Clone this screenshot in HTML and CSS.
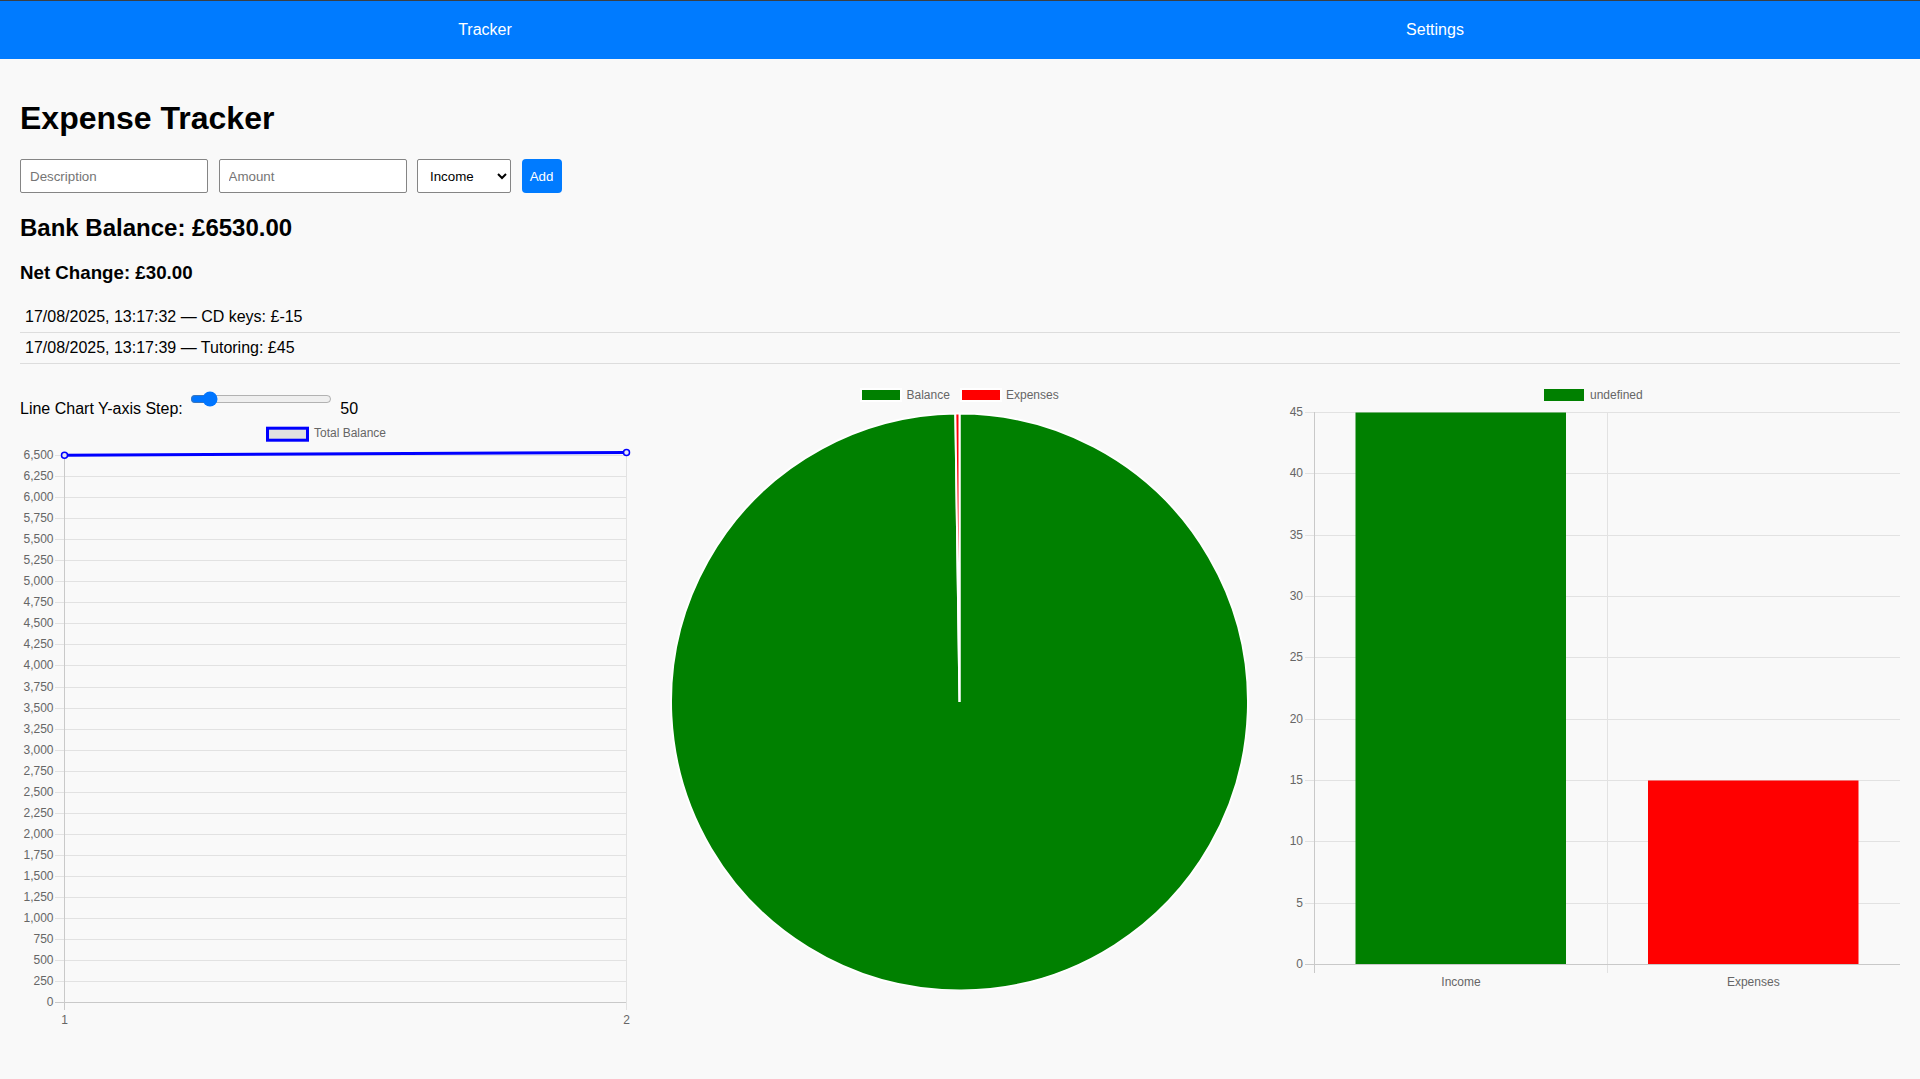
FILE: index.html
```html
<!DOCTYPE html>
<html lang="en">
<head>
<meta charset="utf-8">
<title>Expense Tracker</title>
<link rel="stylesheet" href="styles.css">
</head>
<body>
<nav class="navbar">
  <a class="nav-link" href="#">Tracker</a>
  <a class="nav-link" href="#">Settings</a>
</nav>
<main class="container">
  <h1 class="title">Expense Tracker</h1>
  <div class="form-row">
    <input class="field" type="text" placeholder="Description">
    <input class="field" type="text" placeholder="Amount">
    <select class="type-select">
      <option>Income</option>
      <option>Expense</option>
    </select>
    <button class="add-btn">Add</button>
  </div>
  <h2 class="balance">Bank Balance: £6530.00</h2>
  <h3 class="net">Net Change: £30.00</h3>
  <ul class="history">
    <li class="history-item">17/08/2025, 13:17:32 — CD keys: £-15</li>
    <li class="history-item">17/08/2025, 13:17:39 — Tutoring: £45</li>
  </ul>
  <section class="charts">
    <div class="chart-col">
      <div class="step-control">
        <label class="step-label" for="step">Line Chart Y-axis Step:</label>
        <input class="step-range" id="step" type="range" min="0" max="500" value="50">
        <span class="step-value">50</span>
      </div>
      <svg class="chart" width="611" height="612" viewBox="0 0 611 612">
        <g class="legend">
          <rect x="247.5" y="11.2" width="40" height="12" fill="#e1e1e1" stroke="#0000ff" stroke-width="3"/>
          <text x="294" y="20" class="tick">Total Balance</text>
        </g>
        <g class="grid" stroke="#e2e2e2" stroke-width="1">
          <line x1="35" x2="606" y1="564.5" y2="564.5"/>
          <line x1="35" x2="606" y1="543.5" y2="543.5"/>
          <line x1="35" x2="606" y1="522.5" y2="522.5"/>
          <line x1="35" x2="606" y1="501.5" y2="501.5"/>
          <line x1="35" x2="606" y1="480.5" y2="480.5"/>
          <line x1="35" x2="606" y1="459.5" y2="459.5"/>
          <line x1="35" x2="606" y1="438.5" y2="438.5"/>
          <line x1="35" x2="606" y1="417.5" y2="417.5"/>
          <line x1="35" x2="606" y1="396.5" y2="396.5"/>
          <line x1="35" x2="606" y1="375.5" y2="375.5"/>
          <line x1="35" x2="606" y1="354.5" y2="354.5"/>
          <line x1="35" x2="606" y1="333.5" y2="333.5"/>
          <line x1="35" x2="606" y1="312.5" y2="312.5"/>
          <line x1="35" x2="606" y1="291.5" y2="291.5"/>
          <line x1="35" x2="606" y1="270.5" y2="270.5"/>
          <line x1="35" x2="606" y1="248.5" y2="248.5"/>
          <line x1="35" x2="606" y1="227.5" y2="227.5"/>
          <line x1="35" x2="606" y1="206.5" y2="206.5"/>
          <line x1="35" x2="606" y1="185.5" y2="185.5"/>
          <line x1="35" x2="606" y1="164.5" y2="164.5"/>
          <line x1="35" x2="606" y1="143.5" y2="143.5"/>
          <line x1="35" x2="606" y1="122.5" y2="122.5"/>
          <line x1="35" x2="606" y1="101.5" y2="101.5"/>
          <line x1="35" x2="606" y1="80.5" y2="80.5"/>
          <line x1="35" x2="606" y1="59.5" y2="59.5"/>
          <line x1="35" x2="606" y1="38.5" y2="38.5"/>
          <line x1="606.5" x2="606.5" y1="35" y2="593"/>
        </g>
        <g class="axis" stroke="#c9c9c9" stroke-width="1">
          <line x1="35" x2="606" y1="585.5" y2="585.5"/>
          <line x1="44.5" x2="44.5" y1="35" y2="593"/>
        </g>
        <g class="tick" text-anchor="end">
          <text x="33.5" y="589">0</text>
          <text x="33.5" y="568">250</text>
          <text x="33.5" y="547">500</text>
          <text x="33.5" y="526">750</text>
          <text x="33.5" y="505">1,000</text>
          <text x="33.5" y="484">1,250</text>
          <text x="33.5" y="463">1,500</text>
          <text x="33.5" y="442">1,750</text>
          <text x="33.5" y="421">2,000</text>
          <text x="33.5" y="400">2,250</text>
          <text x="33.5" y="379">2,500</text>
          <text x="33.5" y="358">2,750</text>
          <text x="33.5" y="337">3,000</text>
          <text x="33.5" y="316">3,250</text>
          <text x="33.5" y="295">3,500</text>
          <text x="33.5" y="274">3,750</text>
          <text x="33.5" y="252">4,000</text>
          <text x="33.5" y="231">4,250</text>
          <text x="33.5" y="210">4,500</text>
          <text x="33.5" y="189">4,750</text>
          <text x="33.5" y="168">5,000</text>
          <text x="33.5" y="147">5,250</text>
          <text x="33.5" y="126">5,500</text>
          <text x="33.5" y="105">5,750</text>
          <text x="33.5" y="84">6,000</text>
          <text x="33.5" y="63">6,250</text>
          <text x="33.5" y="42">6,500</text>
        </g>
        <g class="tick" text-anchor="middle">
          <text x="44.5" y="607">1</text>
          <text x="606.5" y="607">2</text>
        </g>
        <polyline points="44.5,38.2 606.5,35.5" fill="none" stroke="#0000ff" stroke-width="3"/>
        <circle cx="44.5" cy="38.2" r="3" fill="#e6e6f5" stroke="#0000ff" stroke-width="1.5"/>
        <circle cx="606.5" cy="35.5" r="3" fill="#e6e6f5" stroke="#0000ff" stroke-width="1.5"/>
      </svg>
    </div>
    <div class="chart-col">
      <svg class="chart" width="611" height="611" viewBox="0 0 611 611">
        <g class="legend">
          <rect x="207" y="10" width="40" height="12" fill="#008000" stroke="#ffffff" stroke-width="2"/>
          <text x="252.5" y="20" class="tick">Balance</text>
          <rect x="307" y="10" width="40" height="12" fill="#ff0000" stroke="#ffffff" stroke-width="2"/>
          <text x="352" y="20" class="tick">Expenses</text>
        </g>
        <path d="M305.5,323 L305.5,34.5 A288.5,288.5 0 1 1 301.35,34.53 Z" fill="#008000" stroke="#ffffff" stroke-width="2" stroke-linejoin="bevel"/>
        <path d="M305.5,323 L301.35,34.53 A288.5,288.5 0 0 1 305.5,34.5 Z" fill="#ff0000" stroke="#ffffff" stroke-width="2" stroke-linejoin="bevel"/>
      </svg>
    </div>
    <div class="chart-col">
      <svg class="chart" width="612" height="611" viewBox="0 0 612 611">
        <g class="legend">
          <rect x="256" y="10" width="40" height="12" fill="#008000"/>
          <text x="302" y="20" class="tick">undefined</text>
        </g>
        <g class="grid" stroke="#e2e2e2" stroke-width="1">
          <line x1="17" x2="612" y1="524.5" y2="524.5"/>
          <line x1="17" x2="612" y1="462.5" y2="462.5"/>
          <line x1="17" x2="612" y1="401.5" y2="401.5"/>
          <line x1="17" x2="612" y1="340.5" y2="340.5"/>
          <line x1="17" x2="612" y1="278.5" y2="278.5"/>
          <line x1="17" x2="612" y1="217.5" y2="217.5"/>
          <line x1="17" x2="612" y1="156.5" y2="156.5"/>
          <line x1="17" x2="612" y1="94.5" y2="94.5"/>
          <line x1="17" x2="612" y1="33.5" y2="33.5"/>
          <line x1="319.5" x2="319.5" y1="33" y2="594"/>
        </g>
        <rect x="67.5" y="33.5" width="210.5" height="552" fill="#008000"/>
        <rect x="360" y="401.5" width="210.5" height="184" fill="#ff0000"/>
        <g class="axis" stroke="#c9c9c9" stroke-width="1">
          <line x1="17" x2="612" y1="585.5" y2="585.5"/>
          <line x1="26.5" x2="26.5" y1="33" y2="594"/>
        </g>
        <g class="tick" text-anchor="end">
          <text x="15" y="589">0</text>
          <text x="15" y="528">5</text>
          <text x="15" y="466">10</text>
          <text x="15" y="405">15</text>
          <text x="15" y="344">20</text>
          <text x="15" y="282">25</text>
          <text x="15" y="221">30</text>
          <text x="15" y="160">35</text>
          <text x="15" y="98">40</text>
          <text x="15" y="37">45</text>
        </g>
        <g class="tick" text-anchor="middle">
          <text x="173" y="607">Income</text>
          <text x="465.3" y="607">Expenses</text>
        </g>
      </svg>
    </div>
  </section>
</main>
</body>
</html>
```
FILE: styles.css
```css
* {
  box-sizing: border-box;
}

body {
  margin: 0;
  background: #f9f9f9;
  font-family: "Liberation Sans", Arial, sans-serif;
  color: #000;
}

.navbar {
  display: flex;
  align-items: center;
  height: 59px;
  padding: 0 10px;
  background: #007bff;
  border-top: 1px solid #3a3f44;
}

.nav-link {
  flex: 1;
  text-align: center;
  color: #fff;
  text-decoration: none;
  font-size: 16px;
}

.container {
  padding: 20px;
}

.title {
  font-size: 32px;
  font-weight: bold;
  margin: 21.44px 0 22px;
}

.form-row {
  display: flex;
  gap: 10.5px;
  align-items: stretch;
}

.field {
  width: 188px;
  height: 34px;
  padding: 8px 9px;
  border: 1px solid #858585;
  border-radius: 2px;
  background: #fff;
  font-family: "Liberation Sans", Arial, sans-serif;
  font-size: 13.33px;
  color: #000;
}

.field::placeholder {
  color: #757575;
}

.type-select {
  width: 94px;
  height: 34px;
  padding: 0 6px 0 8px;
  border: 1px solid #858585;
  border-radius: 2px;
  background: #fff;
  font-family: "Liberation Sans", Arial, sans-serif;
  font-size: 13.33px;
  color: #000;
}

.add-btn {
  width: 40px;
  height: 34px;
  padding: 0;
  border: none;
  border-radius: 4px;
  background: #007bff;
  color: #fff;
  font-family: "Liberation Sans", Arial, sans-serif;
  font-size: 13.33px;
}

.balance {
  font-size: 24px;
  font-weight: bold;
  margin: 21px 0 19.92px;
}

.net {
  font-size: 18.72px;
  font-weight: bold;
  margin: 18.72px 0 17.72px;
}

.history {
  list-style: none;
  margin: 16px 0 15px;
  padding: 0;
}

.history-item {
  font-size: 16px;
  padding: 6px 5px;
  border-bottom: 1px solid #dddddd;
}

.charts {
  display: grid;
  grid-template-columns: 611px 611px 612px;
  column-gap: 23px;
  align-items: start;
}

.chart-col {
  display: flex;
  flex-direction: column;
}

.step-control {
  display: flex;
  align-items: flex-end;
  height: 38px;
  font-size: 16px;
}

.step-label {
  line-height: 16.4px;
}

.step-range {
  align-self: flex-start;
  width: 142px;
  height: 16px;
  margin: 12px 0 0 7px;
}

.step-value {
  margin-left: 8.5px;
  line-height: 16.4px;
}

.chart {
  display: block;
}

.tick {
  font-family: "Liberation Sans", Arial, sans-serif;
  font-size: 12px;
  fill: #666666;
}
```
